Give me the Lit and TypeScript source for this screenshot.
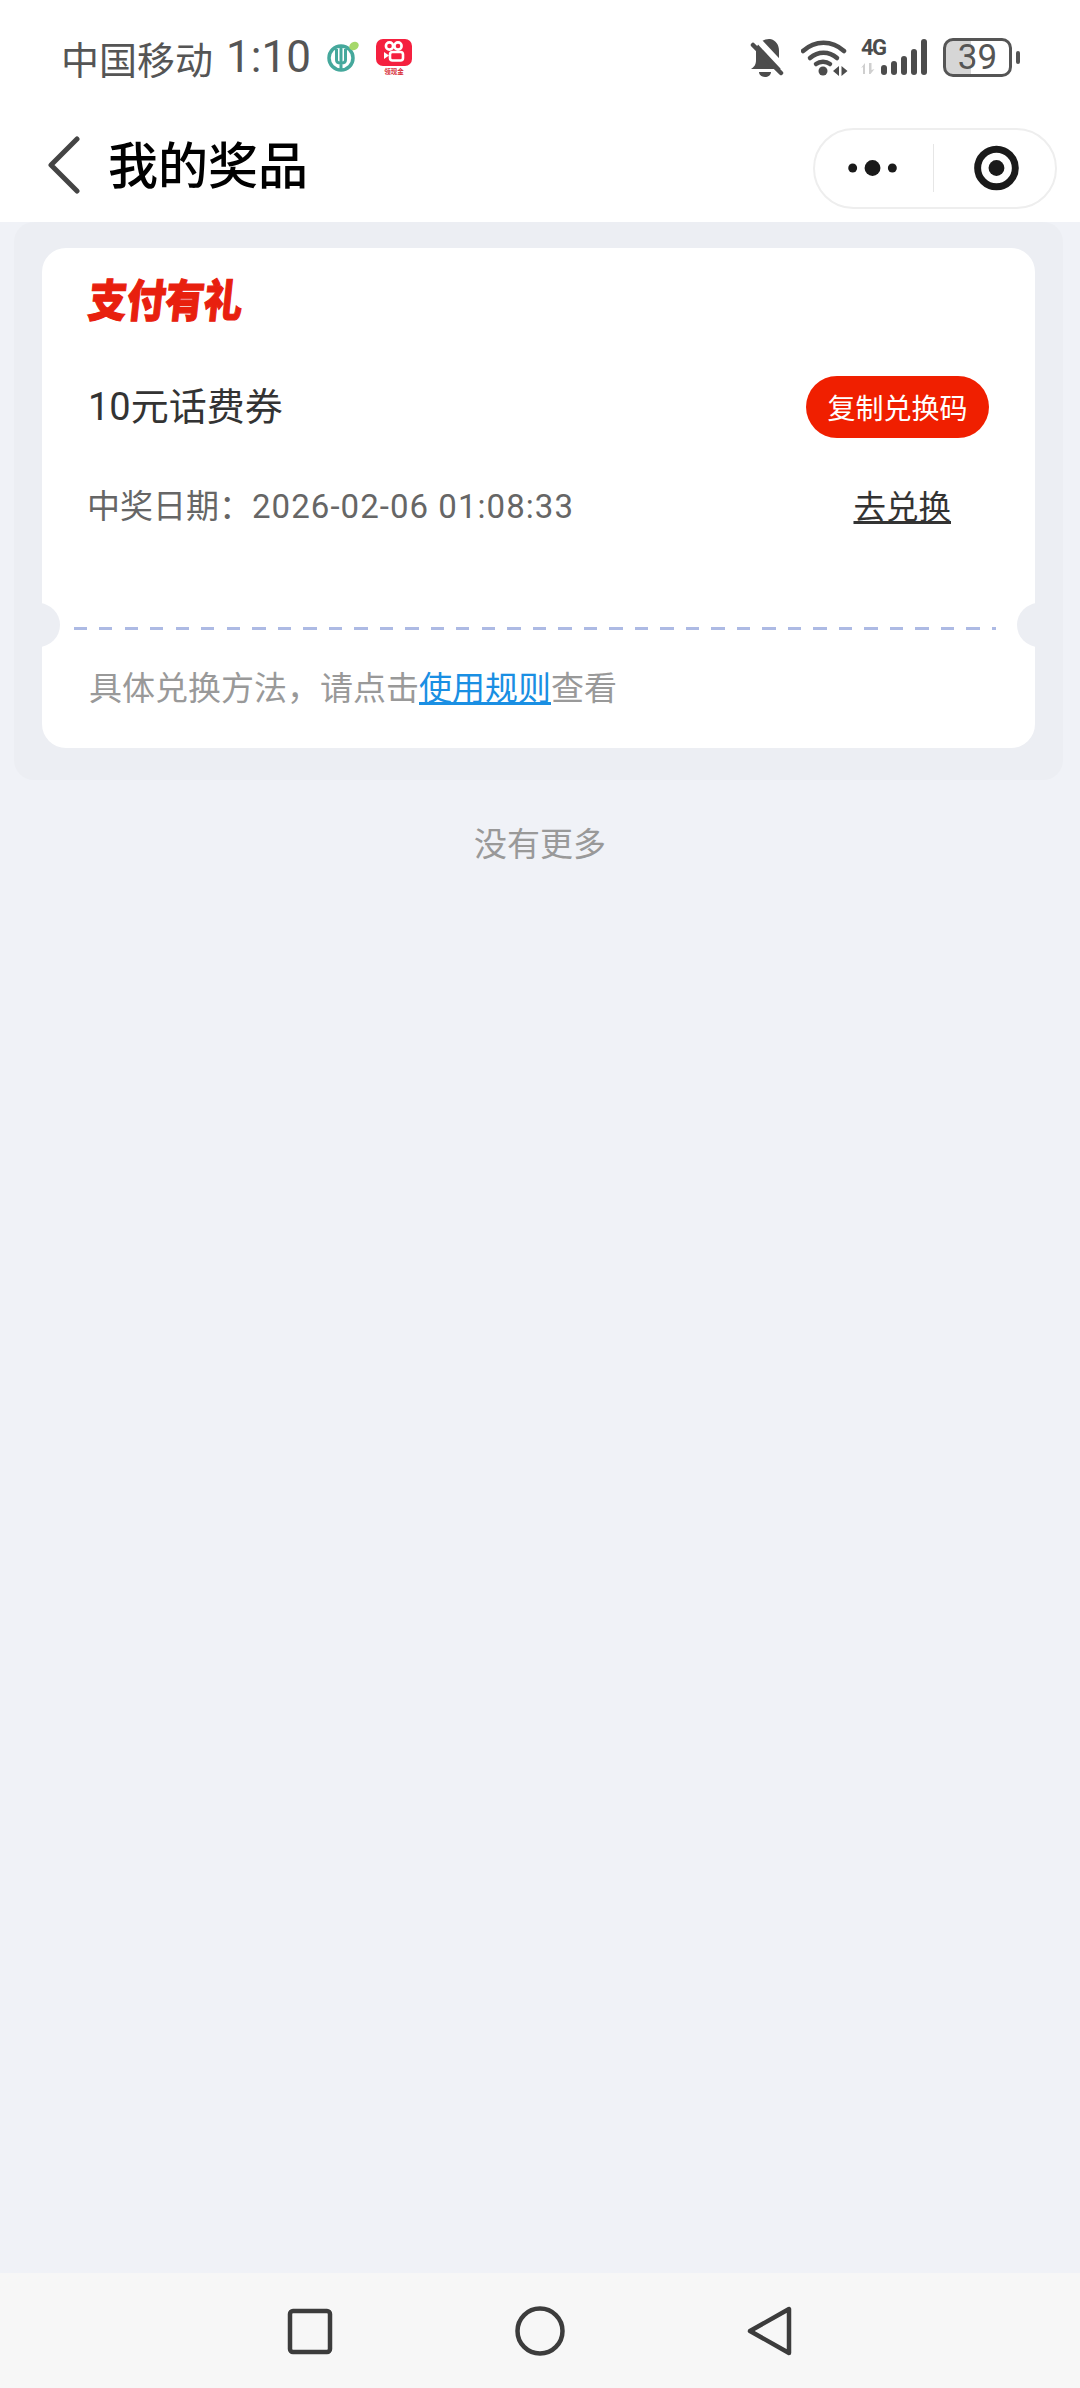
import { LitElement, css, html, svg } from "lit";
import { customElement } from "lit/decorators.js";

const bellIcon = svg`
  <path d="M756 68c3-2 5-4 5-9V50c0-7 7-12 13-12h1c6 1 9 6 9 12v10c0 4 1 6 2 8z" fill="#4c4c4c"/>
  <path d="M764 71h12c0 3-3 5-6 5s-6-2-6-5z" fill="#4c4c4c"/>
  <path d="M762 38l28 30" stroke="#fff" stroke-width="6"/>
  <path d="M758 44l28 28" stroke="#4c4c4c" stroke-width="4.5" stroke-linecap="round"/>
`;

const wifiIcon = svg`
  <g fill="none" stroke="#4c4c4c" stroke-width="4.5" stroke-linecap="round">
    <path d="M805 50c12-11 29-11 41 0"/>
    <path d="M812 57c8-7 19-7 27 0"/>
    <path d="M818 63c4-3 10-3 14 0"/>
  </g>
  <circle cx="825" cy="70" r="4.5" fill="#4c4c4c"/>
  <path d="M841 65v10l-6-5zM843.500 65v10l6-5z" fill="#4c4c4c"/>
`;

@customElement("app-root")
export class AppRoot extends LitElement {
  static styles = css`
    :host {
      display: flex;
      flex-direction: column;
      height: 2388px;
      background: #f0f2f7;
      font-family: Roboto, "Noto Sans CJK SC", sans-serif;
    }

    .top {
      background: #fff;
    }

    .status {
      height: 114px;
      padding: 0 60px 0 61px;
      display: flex;
      align-items: center;
      justify-content: space-between;
      box-sizing: border-box;
      color: #555;
    }

    .status-left {
      display: flex;
      align-items: center;
    }

    .carrier {
      font-size: 38px;
    }

    .time {
      font-size: 44px;
      margin-left: 13px;
      margin-right: 16px;
    }

    .status-right {
      display: flex;
      align-items: center;
    }

    .net {
      width: 66px;
      height: 36px;
      display: flex;
      margin-left: 12px;
    }

    .net-type {
      width: 26px;
      display: flex;
      flex-direction: column;
      gap: 6px;
    }

    .four-g {
      font-size: 22px;
      line-height: 18px;
      font-weight: 700;
      letter-spacing: -1.5px;
      color: #4c4c4c;
    }

    .bars {
      display: flex;
      align-items: flex-end;
      gap: 4px;
      margin-left: -46px;
      height: 36px;
    }

    .bars span {
      width: 6px;
      border-radius: 3px;
      background: #4c4c4c;
    }

    .battery {
      width: 69px;
      height: 39px;
      margin-left: 16px;
      box-sizing: border-box;
      border: 3px solid #555;
      border-radius: 10px;
      background: linear-gradient(90deg, #d6d6d6 0 39%, #fff 39%);
      display: flex;
      align-items: center;
      justify-content: center;
      font-size: 35px;
      color: #555;
    }

    .nub {
      width: 4px;
      height: 13px;
      margin-left: 4px;
      border-radius: 2px;
      background: #555;
    }

    .nav {
      height: 108px;
      padding: 0 23px 0 48px;
      display: flex;
      align-items: center;
    }

    .back {
      margin-bottom: 6px;
    }

    .nav-title {
      font-size: 50px;
      font-weight: 500;
      color: #000;
      margin-left: 28px;
      margin-bottom: 12px;
      flex: 1;
    }

    .capsule {
      width: 244px;
      height: 81px;
      box-sizing: border-box;
      border: 2px solid #eee;
      border-radius: 41px;
      display: flex;
      align-items: center;
    }

    .capsule svg {
      display: block;
    }

    .divider {
      width: 1px;
      height: 48px;
      background: #e6e6e6;
    }

    .content {
      flex: 1;
    }

    .panel {
      margin: 0 17px 0 14px;
      padding: 26px 28px 32px;
      border-radius: 20px;
      background: #eceef3;
    }

    .card {
      position: relative;
      height: 500px;
      padding: 0 46px 0 46px;
      box-sizing: border-box;
      background: #fff;
      border-radius: 24px;
      overflow: hidden;
    }

    .card::before,
    .card::after {
      content: "";
      position: absolute;
      top: 355px;
      width: 44px;
      height: 44px;
      border-radius: 50%;
      background: #eceef3;
    }

    .card::before {
      left: -26px;
    }

    .card::after {
      right: -26px;
    }

    .brand {
      display: block;
      width: max-content;
      padding-top: 23px;
      padding-left: 2px;
      height: 58px;
      font-size: 38.5px;
      line-height: 58px;
      font-weight: 900;
      color: #e8200e;
      -webkit-text-stroke: 1px #e8200e;
      transform: scaleY(1.16) skewX(-7deg);
      transform-origin: 0 50%;
    }

    .row {
      display: flex;
      align-items: center;
      justify-content: space-between;
    }

    .prize {
      margin-top: 47px;
      height: 62px;
    }

    .prize-name {
      font-size: 38px;
      color: #333;
      margin-bottom: 8px;
    }

    .copy {
      width: 183px;
      height: 62px;
      border-radius: 31px;
      background: #f01f00;
      color: #fff;
      font-size: 28px;
      display: flex;
      align-items: center;
      justify-content: center;
    }

    .date-row {
      margin-top: 35px;
      height: 62px;
    }

    .date {
      font-size: 33px;
      color: #666;
      margin-left: -1px;
    }

    .date b {
      font-weight: 400;
      letter-spacing: 1.05px;
    }

    .redeem {
      font-size: 32.5px;
      color: #333;
      text-decoration: underline;
      margin-right: 38px;
    }

    .dash {
      margin: 92px -7px 0 -14px;
      height: 3px;
      background: repeating-linear-gradient(90deg, #adbae4 0 13px, transparent 13px 25.5px);
    }

    .rule {
      margin-top: 35px;
      margin-left: 1px;
      font-size: 33px;
      line-height: 48px;
      color: #999;
      white-space: nowrap;
    }

    .rule a {
      color: #1a8fe3;
      text-decoration: underline;
    }

    .more {
      margin-top: 41px;
      text-align: center;
      font-size: 33px;
      line-height: 48px;
      color: #999;
    }

    .sysbar {
      height: 115px;
      background: #f7f7f7;
      display: flex;
      align-items: center;
      justify-content: center;
    }

    .sysbar span {
      width: 230px;
      display: flex;
      justify-content: center;
    }

    .mini {
      font-size: 6.5px;
      font-weight: 700;
      fill: #d8303c;
    }

    .gap-left {
      margin-left: 17px;
    }

    .gap-wifi {
      margin-left: 17px;
    }
  `;

  render() {
    return html`
      <div class="top">
        <div class="status">
          <div class="status-left">
            <span class="carrier">中国移动</span>
            <span class="time">1:10</span>
            <svg width="32" height="32" viewBox="0 0 32 32">
              <circle cx="14" cy="17" r="12" fill="none" stroke="#45a89c" stroke-width="3.5"/>
              <path d="M14 6v22M9.500 8v11c0 2 2 3 4.500 3s4.500-1 4.500-3V8" fill="none" stroke="#45a89c" stroke-width="3"/>
              <ellipse cx="27" cy="5" rx="5" ry="4" fill="#a5d86a" transform="rotate(-35 27 5)"/>
            </svg>
            <svg class="gap-left" width="36" height="36" viewBox="0 0 36 36">
              <rect width="36" height="27" rx="7" fill="#f5203f"/>
              <circle cx="13.500" cy="7" r="3.600" fill="none" stroke="#fff" stroke-width="2.600"/>
              <circle cx="22" cy="7" r="3.600" fill="none" stroke="#fff" stroke-width="2.600"/>
              <rect x="14" y="13" width="13" height="8.500" rx="2.500" fill="none" stroke="#fff" stroke-width="2.600"/>
              <path d="M8 13l5 3.500-5 3.500z" fill="#fff"/>
              <text class="mini" x="18" y="35" text-anchor="middle">领现金</text>
            </svg>
          </div>
          <div class="status-right">
            <svg width="36" height="40" viewBox="753 36 36 40">${bellIcon}</svg>
            <svg class="gap-wifi" width="48" height="40" viewBox="803 36 48 40">${wifiIcon}</svg>
            <div class="net">
              <div class="net-type">
                <span class="four-g">4G</span>
                <svg width="15" height="11" viewBox="0 0 15 11">
                  <path d="M4 0v11H2V4L0 5zM8 0h2.500v7l3-1-4 5H8z" fill="#cfcfcf"/>
                </svg>
              </div>
            </div>
            <div class="bars">
              <span style="height:10px"></span>
              <span style="height:14px"></span>
              <span style="height:19px"></span>
              <span style="height:26px"></span>
              <span style="height:36px"></span>
            </div>
            <div class="battery">39</div>
            <div class="nub"></div>
          </div>
        </div>
        <div class="nav">
          <svg class="back" width="32" height="58" viewBox="0 0 32 58">
            <path d="M29 3L3 29l26 26" fill="none" stroke="#444" stroke-width="5" stroke-linecap="round" stroke-linejoin="round"/>
          </svg>
          <div class="nav-title">我的奖品</div>
          <div class="capsule">
            <svg width="119" height="60" viewBox="0 0 119 60">
              <circle cx="38" cy="30" r="4.500" fill="#1a1a1a"/>
              <circle cx="58" cy="30" r="8" fill="#1a1a1a"/>
              <circle cx="78" cy="30" r="4.500" fill="#1a1a1a"/>
            </svg>
            <div class="divider"></div>
            <svg width="122" height="60" viewBox="0 0 122 60">
              <circle cx="63" cy="30" r="19" fill="none" stroke="#1a1a1a" stroke-width="7"/>
              <circle cx="63" cy="30" r="8" fill="#1a1a1a"/>
            </svg>
          </div>
        </div>
      </div>
      <div class="content">
        <div class="panel">
          <div class="card">
            <span class="brand">支付有礼</span>
            <div class="row prize">
              <span class="prize-name">10元话费券</span>
              <span class="copy">复制兑换码</span>
            </div>
            <div class="row date-row">
              <span class="date">中奖日期：<b>2026-02-06 01:08:33</b></span>
              <span class="redeem">去兑换</span>
            </div>
            <div class="dash"></div>
            <div class="rule">具体兑换方法，请点击<a>使用规则</a>查看</div>
          </div>
        </div>
        <div class="more">没有更多</div>
      </div>
      <div class="sysbar">
        <span>
          <svg width="60" height="60" viewBox="0 0 60 60">
            <rect x="10" y="10" width="40" height="41" rx="3" fill="none" stroke="#3c3c3c" stroke-width="4.500"/>
          </svg>
        </span>
        <span>
          <svg width="60" height="60" viewBox="0 0 60 60">
            <circle cx="30" cy="30" r="22.500" fill="none" stroke="#3c3c3c" stroke-width="4.500"/>
          </svg>
        </span>
        <span>
          <svg width="60" height="60" viewBox="0 0 60 60">
            <path d="M49 8v44L10 30z" fill="none" stroke="#3c3c3c" stroke-width="4.500" stroke-linejoin="round"/>
          </svg>
        </span>
      </div>
    `;
  }
}
